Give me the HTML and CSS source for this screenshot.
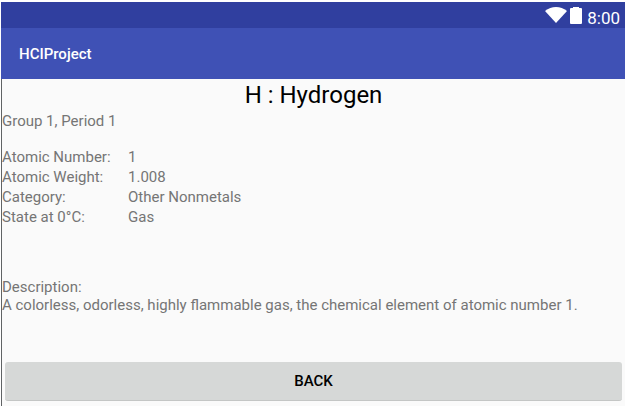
FILE: index.html
```html
<!DOCTYPE html>
<html lang="en">
<head>
<meta charset="utf-8">
<title>HCIProject</title>
<link rel="stylesheet" href="styles.css">
</head>
<body>
<div class="screen">
  <div class="status-bar">
    <svg class="wifi" viewBox="0 0 22 16" aria-hidden="true"><path d="M0 4Q5 0 11 0T22 4L11 16Z"/></svg>
    <svg class="battery" viewBox="0 0 12 17" aria-hidden="true"><path d="M0 2Q0 1 1 1H3V0H9V1H11Q12 1 12 2V16Q12 17 11 17H1Q0 17 0 16Z"/></svg>
    <time class="clock">8:00</time>
  </div>
  <header class="app-bar">HCIProject</header>
  <main class="content">
    <h1 class="title">H : Hydrogen</h1>
    <p class="position">Group 1, Period 1</p>
    <dl class="facts">
      <dt>Atomic Number:</dt><dd>1</dd>
      <dt>Atomic Weight:</dt><dd>1.008</dd>
      <dt>Category:</dt><dd>Other Nonmetals</dd>
      <dt>State at 0°C:</dt><dd>Gas</dd>
    </dl>
    <section class="description">
      <h2>Description:</h2>
      <p>A colorless, odorless, highly flammable gas, the chemical element of atomic number 1.</p>
    </section>
    <button class="back" type="button">BACK</button>
  </main>
</div>
</body>
</html>
```
FILE: styles.css
```css
* {
  box-sizing: border-box;
}

body {
  margin: 0;
  padding: 2px 0 0 1px;
  background: #fff;
  color: #757575;
  font-family: Roboto, "Liberation Sans", sans-serif;
  font-size: 15px;
  line-height: 18px;
}

.screen {
  display: flex;
  flex-direction: column;
  min-height: calc(100vh - 2px);
  border-left: 1px solid #606365;
  background: #fafafa;
}

.status-bar {
  display: flex;
  align-items: center;
  justify-content: flex-end;
  height: 26px;
  margin-left: -1px;
  padding-right: 5px;
  background: #303f9f;
  color: #fff;
}

.status-bar svg {
  fill: #fff;
}

.wifi {
  width: 22px;
  height: 16px;
}

.battery {
  width: 12px;
  height: 17px;
  margin: 0 5px 0 3px;
}

.clock {
  padding-top: 6px;
  font-size: 17px;
}

.app-bar {
  display: flex;
  align-items: center;
  height: 51px;
  margin-left: -1px;
  padding-left: 18px;
  background: #3f51b5;
  color: #fff;
  font-size: 15px;
  font-weight: 500;
}

.title {
  margin: 0;
  color: #000;
  font-size: 24px;
  font-weight: 400;
  line-height: 33px;
  text-align: center;
}

.position {
  margin: 0 0 17px;
}

.facts {
  display: grid;
  grid-template-columns: 126px 1fr;
  margin: 0;
  line-height: 20px;
}

.facts dd {
  margin: 0;
}

.description {
  margin: 51px 0 48px;
}

.description h2,
.description p {
  margin: 0;
  font-size: inherit;
  font-weight: 400;
}

.back {
  display: block;
  width: calc(100% - 6px);
  height: 39px;
  margin: 0 3px 4px;
  border: 0;
  border-bottom: 1px solid #c4c6c5;
  border-radius: 3px;
  background: #d6d8d7;
  color: #000;
  font-family: inherit;
  font-size: 15px;
  font-weight: 500;
}
```
